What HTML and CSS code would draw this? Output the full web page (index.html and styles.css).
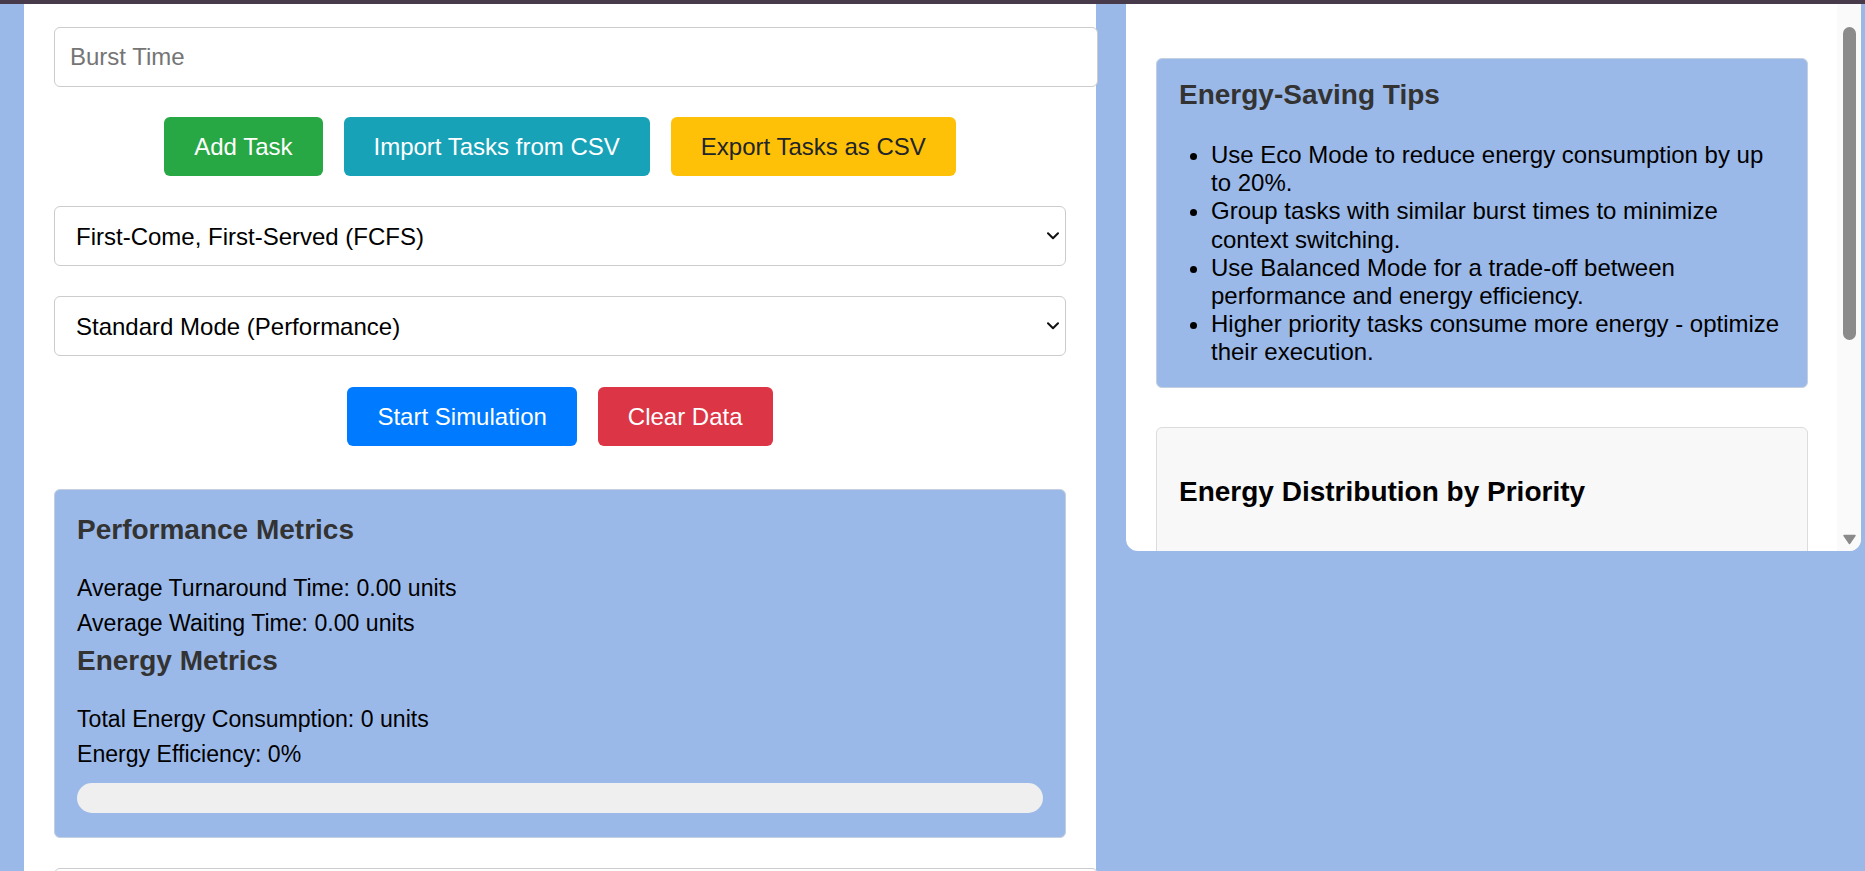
FILE: index.html
```html
<!DOCTYPE html>
<html lang="en">
<head>
<meta charset="utf-8">
<title>Energy-Aware Scheduler</title>
<link rel="stylesheet" href="styles.css">
</head>
<body>
<div class="topbar"></div>
<div class="page">
  <main class="left">
    <input class="field" type="text" placeholder="Burst Time">
    <div class="btn-row row-one">
      <button class="btn green">Add Task</button>
      <button class="btn teal">Import Tasks from CSV</button>
      <button class="btn yellow">Export Tasks as CSV</button>
    </div>
    <div class="select-wrap sel-one">
      <select class="select">
        <option>First-Come, First-Served (FCFS)</option>
      </select>
      <svg class="chev" width="12" height="8" viewBox="0 0 12 8"><path d="M1 1.2 L6 6.2 L11 1.2" fill="none" stroke="#111" stroke-width="2" stroke-linecap="round" stroke-linejoin="round"/></svg>
    </div>
    <div class="select-wrap sel-two">
      <select class="select">
        <option>Standard Mode (Performance)</option>
      </select>
      <svg class="chev" width="12" height="8" viewBox="0 0 12 8"><path d="M1 1.2 L6 6.2 L11 1.2" fill="none" stroke="#111" stroke-width="2" stroke-linecap="round" stroke-linejoin="round"/></svg>
    </div>
    <div class="btn-row row-two">
      <button class="btn blue">Start Simulation</button>
      <button class="btn red">Clear Data</button>
    </div>
    <section class="metrics">
      <h3 class="m-title">Performance Metrics</h3>
      <p class="m-line">Average Turnaround Time: 0.00 units</p>
      <p class="m-line">Average Waiting Time: 0.00 units</p>
      <h3 class="m-title m-title-2">Energy Metrics</h3>
      <p class="m-line">Total Energy Consumption: 0 units</p>
      <p class="m-line">Energy Efficiency: 0%</p>
      <div class="bar"></div>
    </section>
    <div class="next-box"></div>
  </main>
  <aside class="right">
    <div class="right-scroll">
      <section class="tips">
        <h3 class="tips-title">Energy-Saving Tips</h3>
        <ul class="tips-list">
          <li>Use Eco Mode to reduce energy consumption by up to 20%.</li>
          <li>Group tasks with similar burst times to minimize context switching.</li>
          <li>Use Balanced Mode for a trade-off between performance and energy efficiency.</li>
          <li>Higher priority tasks consume more energy - optimize their execution.</li>
        </ul>
      </section>
      <section class="chart">
        <h3 class="chart-title">Energy Distribution by Priority</h3>
        <div class="chart-area"></div>
      </section>
    </div>
    <div class="scrollbar">
      <div class="thumb"></div>
      <svg class="arrow-down" width="15" height="11" viewBox="0 0 15 11"><path d="M2 1.5 H13 L7.5 9.5 Z" fill="#8a8a8a" stroke="#8a8a8a" stroke-width="1.5" stroke-linejoin="round"/></svg>
    </div>
  </aside>
</div>
</body>
</html>
```

FILE: styles.css
```css
html, body {
  margin: 0;
  padding: 0;
  height: 100%;
  overflow: hidden;
}
body {
  background: #9bb9e8;
  font-family: "Liberation Sans", Arial, sans-serif;
  font-size: 24px;
  color: #000;
}
.topbar {
  height: 4px;
  background: #463a4b;
}
.page {
  display: flex;
  align-items: flex-start;
  gap: 30px;
  padding-left: 24px;
}
.left {
  width: 1072px;
  flex: none;
  box-sizing: border-box;
  background: #fff;
  padding: 23px 30px 40px;
  height: 900px;
  display: flex;
  flex-direction: column;
}
.field {
  display: block;
  width: 100%;
  box-sizing: content-box;
  padding: 15px;
  border: 1px solid #ccc;
  border-radius: 6px;
  font: 24px "Liberation Sans", Arial, sans-serif;
  line-height: normal;
  color: #333;
  background: #fff;
  margin: 0;
  flex: none;
}
.field::placeholder { color: #757575; }
.btn-row {
  display: flex;
  justify-content: center;
  gap: 21px;
  flex: none;
}
.row-one { margin-top: 30px; }
.row-two { margin-top: 31px; }
.btn {
  font: 24px "Liberation Sans", Arial, sans-serif;
  line-height: normal;
  padding: 15px 30px;
  border: none;
  border-radius: 6px;
  color: #fff;
  cursor: pointer;
  height: 59px;
}
.green { background: #28a745; }
.teal { background: #17a2b8; }
.yellow { background: #ffc107; color: #212529; }
.blue { background: #007bff; }
.red { background: #dc3545; }
.select-wrap {
  position: relative;
  flex: none;
}
.select {
  display: block;
  width: 100%;
  box-sizing: border-box;
  height: 60px;
  padding: 0 40px 0 21px;
  border: 1px solid #ccc;
  border-radius: 6px;
  font: 24px "Liberation Sans", Arial, sans-serif;
  color: #000;
  background: #fff;
  margin: 0;
  -webkit-appearance: none;
  appearance: none;
}
.chev {
  position: absolute;
  right: 7px;
  top: 26px;
  pointer-events: none;
}
.sel-one { margin-top: 30px; }
.sel-two { margin-top: 30px; }
.metrics {
  margin-top: 43px;
  background: #9bb9e8;
  border: 1px solid #c4cfdf;
  border-radius: 6px;
  padding: 21px 22px 24px;
  flex: none;
}
.m-title {
  margin: 0 0 22px;
  font-size: 28px;
  line-height: 38px;
  color: #333;
}
.m-title-2 { margin-top: 2px; }
.m-line {
  margin: 0;
  font-size: 23.1px;
  line-height: 34.5px;
  color: #000;
}
.bar {
  margin-top: 12px;
  height: 30px;
  border-radius: 15px;
  background: #efefef;
}
.next-box {
  margin-top: 30px;
  width: 100%;
  box-sizing: content-box;
  padding: 0 15px;
  height: 60px;
  border: 1px solid #ccc;
  border-radius: 6px;
  background: #fff;
  flex: none;
}
.right {
  width: 735px;
  height: 547px;
  flex: none;
  display: flex;
  background: #fff;
  border-radius: 0 0 12px 12px;
  overflow: hidden;
}
.right-scroll {
  flex: 1;
  min-width: 0;
  overflow: hidden;
  padding: 54px 29px 0 30px;
}
.scrollbar {
  width: 24px;
  flex: none;
  background: #fafafa;
  display: flex;
  flex-direction: column;
  align-items: center;
}
.thumb {
  margin-top: 23px;
  width: 13px;
  height: 313px;
  border-radius: 7px;
  background: #8b8b8b;
}
.arrow-down {
  margin-top: auto;
  margin-bottom: 6px;
}
.tips {
  background: #9bb9e8;
  border: 1px solid #c4cfdf;
  border-radius: 6px;
  padding: 20px 22px;
}
.tips-title {
  margin: 0 0 30px;
  font-size: 28px;
  color: #333;
}
.tips-list {
  margin: 0;
  padding-left: 32px;
  font-size: 24px;
  line-height: 28.2px;
}
.chart {
  margin-top: 39px;
  background: #f8f8f8;
  border: 1px solid #dcdcdc;
  border-radius: 6px;
  padding: 20px 22px;
}
.chart-title {
  margin: 28px 0 0;
  font-size: 28px;
  color: #000;
}
.chart-area {
  height: 400px;
}
```
